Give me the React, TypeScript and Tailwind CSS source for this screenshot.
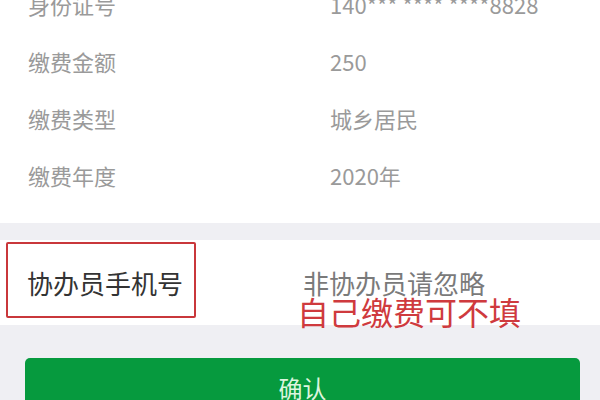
import React from "react";

const rows = [
  { label: "身份证号", value: "140*** **** ****8828" },
  { label: "缴费金额", value: "250" },
  { label: "缴费类型", value: "城乡居民" },
  { label: "缴费年度", value: "2020年" },
];

export default function App() {
  return (
    <div
      className="w-[600px] h-[400px] overflow-hidden bg-[#efeff3] flex flex-col"
      style={{ fontFamily: '"Noto Sans CJK SC", "Noto Sans", sans-serif' }}
    >
      <div className="bg-white -mt-[24px] pb-[19px] flex flex-col">
        {rows.map((r) => (
          <div key={r.label} className="h-[57px] flex items-center text-[22px] text-[#9a9a9a]">
            <div className="w-[330px] pl-[28px]">{r.label}</div>
            <div>{r.value}</div>
          </div>
        ))}
      </div>
      <div className="h-[17px] shrink-0" />
      <div className="relative bg-white h-[85px] shrink-0 flex items-center">
        <div className="w-[303px] pl-[27px] text-[26px] text-[#333333] leading-none">协办员手机号</div>
        <div className="text-[26px] text-[#7a7a7a] leading-none">非协办员请忽略</div>
        <div className="absolute left-[6px] top-[2px] w-[190px] h-[76px] border-2 border-[#c9373b] rounded-[2px]" />
      </div>
      <div className="relative h-0">
        <div className="absolute left-[297px] -top-[30px] text-[32px] leading-none text-[#cf3a3e] whitespace-nowrap">
          自己缴费可不填
        </div>
      </div>
      <div className="pt-[33px] px-[25px] pr-[20px]">
        <div className="h-[60px] rounded-[5px] bg-[#069a3e] flex items-center justify-center text-[24px] text-[#dcf5df]">
          确认
        </div>
      </div>
    </div>
  );
}
